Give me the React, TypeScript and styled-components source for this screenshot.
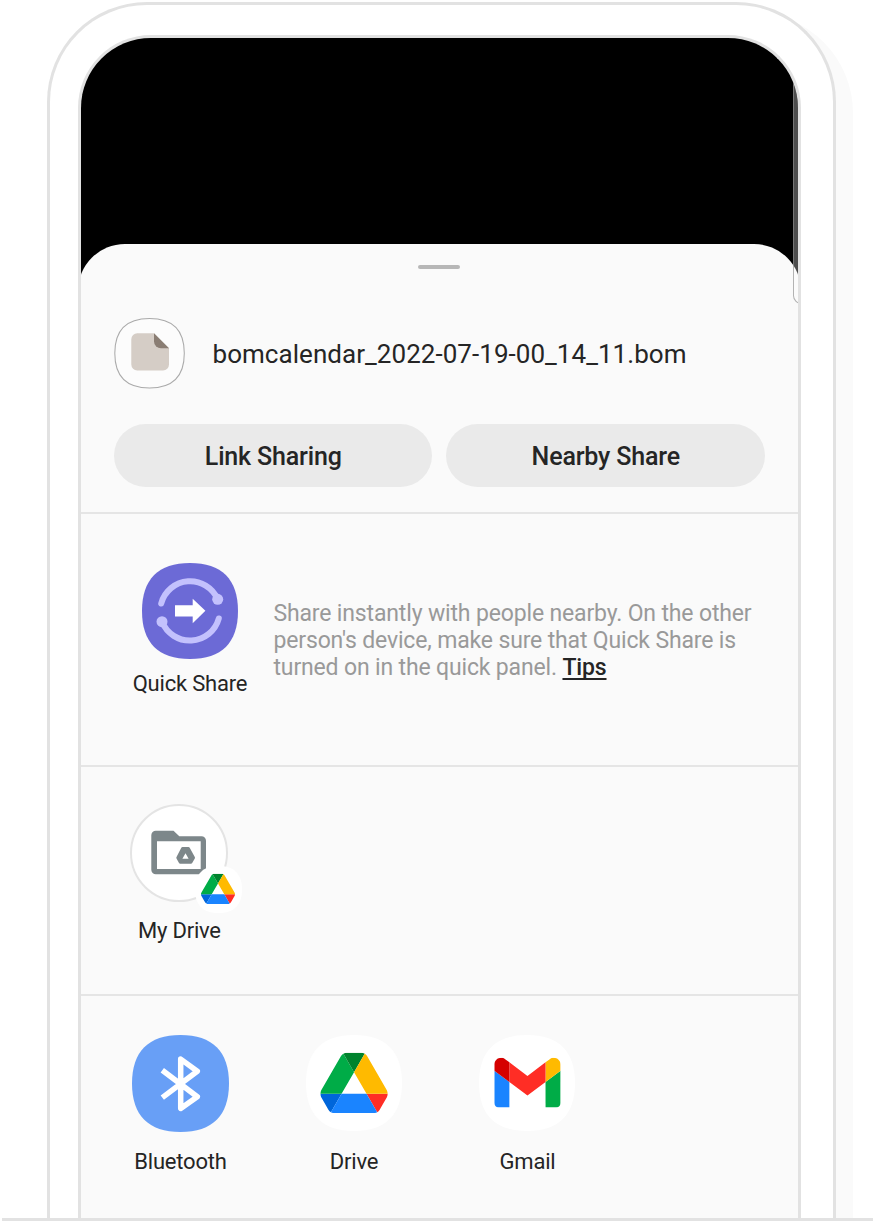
import React from 'react';
import styled, { createGlobalStyle } from 'styled-components';

const GlobalStyle = createGlobalStyle`
  *, *::before, *::after { box-sizing: border-box; }
  body { margin: 0; background: #fff; font-family: Roboto, "Liberation Sans", sans-serif; }
`;

const Page = styled.main`
  width: 886px;
  height: 1221px;
  overflow: hidden;
  display: flex;
  flex-direction: column;
  padding-top: 1.5px;
`;

const PhoneFrame = styled.div`
  flex: 1;
  min-height: 0;
  width: 789px;
  margin-left: 46.7px;
  padding: 30px 28.3px 0;
  border: 3px solid #e2e2e2;
  border-bottom: 0;
  border-radius: 100px 100px 0 0;
  background: #fff;
  box-shadow: 17px 11px 0 #fafafa;
`;

const GroundLine = styled.div`
  flex: none;
  position: relative;
  width: 871.5px;
  height: 3px;
  margin-left: 1.5px;
  background: #e2e2e2;
`;

const Screen = styled.div`
  position: relative;
  width: 723px;
  height: 100%;
  padding-top: 206px;
  overflow: hidden;
  border: 3px solid #e2e2e2;
  border-bottom: 0;
  border-radius: 73px 73px 0 0;
  background: #000;
`;

const EdgePanel = styled.div`
  position: absolute;
  top: 20px;
  right: -12px;
  width: 17px;
  height: 246px;
  border: 1.5px solid rgba(140, 140, 140, 0.65);
  border-radius: 9px;
  background: rgba(255, 255, 255, 0.3);
`;

const Sheet = styled.section`
  height: 980px;
  margin: 0 -3px;
  padding: 0 3px;
  border-radius: 47px 47px 0 0;
  background: #fafafa;
`;

const Handle = styled.div`
  width: 42px;
  height: 3.5px;
  margin-left: 304px;
  border-radius: 2px;
  background: #b7b7b7;
`;

const Section = styled.div<{ $height: number; $top: number; $left: number; $line?: boolean }>`
  height: ${(p) => p.$height}px;
  padding: ${(p) => p.$top}px 0 0 ${(p) => p.$left}px;
  border-top: ${(p) => (p.$line ? '2px solid #e5e5e5' : '0')};
`;

const FileRow = styled.div`
  display: flex;
  align-items: center;
  gap: 27.5px;
  height: 70px;
  margin-top: 49.5px;
`;

const FileName = styled.div`
  padding-top: 2px;
  font-size: 26px;
  line-height: 32px;
  letter-spacing: 0.045px;
  color: #252525;
  white-space: nowrap;
`;

const Actions = styled.div`
  display: flex;
  gap: 14px;
  margin-top: 35.5px;
`;

const ActionButton = styled.button`
  width: 318.5px;
  height: 63.5px;
  padding: 3px 0 0;
  border: 0;
  border-radius: 32px;
  background: #eaeaea;
  font: 500 25px/30px Roboto, "Liberation Sans", sans-serif;
  letter-spacing: -0.17px;
  color: #252525;
`;

const QuickRow = styled.div`
  display: flex;
  gap: 23.5px;
`;

const AppItem = styled.div<{ $width: number; $gap: number }>`
  flex: none;
  display: flex;
  flex-direction: column;
  align-items: center;
  gap: ${(p) => p.$gap}px;
  width: ${(p) => p.$width}px;
`;

const Label = styled.span`
  font-size: 22px;
  line-height: 26px;
  letter-spacing: -0.2px;
  color: #252525;
  white-space: nowrap;
`;

const Description = styled.p`
  width: 500px;
  margin: 37px 0 0;
  font-size: 23px;
  line-height: 27px;
  letter-spacing: -0.155px;
  color: #999;
  white-space: nowrap;
`;

const Tips = styled.a`
  font-weight: 500;
  color: #252525;
  text-decoration: underline;
  text-decoration-thickness: 1.5px;
  text-underline-offset: 3px;
  text-decoration-skip-ink: none;
`;

const Avatar = styled.div`
  position: relative;
  width: 98px;
  height: 98px;
  border: 2px solid #e4e4e4;
  border-radius: 50%;
  background: #fff;
`;

const FolderIcon = styled.svg`
  display: block;
  margin: -2px;
`;

const AvatarBadge = styled.div`
  position: absolute;
  left: 62.5px;
  top: 60px;
  width: 47px;
  height: 47px;
`;

const AppGrid = styled.div`
  display: flex;
  gap: 53.5px;
`;

const Icon = styled.svg`
  display: block;
  flex: none;
  overflow: visible;
`;

const SQUIRCLE = 'M50 0C83 0 100 17 100 50S83 100 50 100S0 83 0 50S17 0 50 0Z';

function DriveLogo({ x, y, width }: { x: number; y: number; width: number }) {
  return (
    <svg x={x} y={y} width={width} height={(width * 78) / 87.3} viewBox="0 0 87.3 78">
      <path fill="#0066da" d="m6.6 66.85 3.85 6.65c.8 1.4 1.95 2.5 3.3 3.3l13.75-23.8h-27.5c0 1.55.4 3.1 1.2 4.5z" />
      <path fill="#00ac47" d="m43.65 25-13.75-23.8c-1.35.8-2.5 1.9-3.3 3.3l-25.4 44a9.06 9.06 0 0 0-1.2 4.5h27.5z" />
      <path fill="#ff2d25" d="m73.55 76.8c1.35-.8 2.5-1.9 3.3-3.3l1.6-2.75 7.65-13.25c.8-1.4 1.2-2.95 1.2-4.5h-27.5z" />
      <path fill="#00832d" d="m43.65 25 13.75-23.8c-1.35-.8-2.9-1.2-4.5-1.2h-18.5c-1.6 0-3.15.45-4.5 1.2z" />
      <path fill="#1a84ff" d="m59.8 53h-32.3l-13.75 23.8c1.35.8 2.9 1.2 4.5 1.2h50.8c1.6 0 3.15-.45 4.5-1.2z" />
      <path fill="#ffba00" d="m73.4 26.5-12.7-22c-.8-1.4-1.95-2.5-3.3-3.3l-13.75 23.8 16.15 28h27.45c0-1.55-.4-3.1-1.2-4.5z" />
    </svg>
  );
}

function Squircle({ size, fill }: { size: number; fill: string }) {
  return <path d={SQUIRCLE} fill={fill} transform={`scale(${size / 100})`} />;
}

function FileIcon() {
  return (
    <Icon width="71" height="70" viewBox="0 0 71 70">
      <path d={SQUIRCLE} transform="translate(.8 .5) scale(.695)" fill="#fcfcfc" stroke="#aaa" strokeWidth="1.5" />
      <path d="M23.300 15.300H40L55 30.300V46.500a6 6 0 0 1-6 6H23.300a6 6 0 0 1-6-6V21.300a6 6 0 0 1 6-6Z" fill="#d5cdc6" />
      <path d="M40 15.300L55 30.300H47a7 7 0 0 1-7-7Z" fill="#8a7d73" />
    </Icon>
  );
}

function QuickShareIcon() {
  return (
    <Icon width="96" height="96" viewBox="0 0 96 96">
      <Squircle size={96} fill="#6c6ad6" />
      <g fill="none" stroke="#c3c1fd" strokeWidth="6" strokeLinecap="round">
        <path d="M19.200 40.500A30 30 0 0 1 75.700 36.300" />
        <path d="M76.800 55.500A30 30 0 0 1 20 58.700" />
      </g>
      <circle cx="75.700" cy="36.300" r="5.500" fill="#c3c1fd" />
      <circle cx="20" cy="58.700" r="5.500" fill="#c3c1fd" />
      <path d="M33 42.300H50.700V35.700L63.400 47.800L50.700 60.300V53.500H33Z" fill="#fff" />
    </Icon>
  );
}

function BluetoothIcon() {
  return (
    <Icon width="97" height="97" viewBox="0 0 97 97">
      <Squircle size={97} fill="#689ff6" />
      <path
        d="M30.300 35.300L65.300 61.800L48.700 73.400V24.100L65.300 36.300L30.300 62.600"
        fill="none"
        stroke="#fff"
        strokeWidth="5.500"
        strokeLinejoin="round"
      />
    </Icon>
  );
}

function DriveIcon() {
  return (
    <Icon width="96" height="96" viewBox="0 0 96 96">
      <Squircle size={96} fill="#fff" />
      <DriveLogo x={14.3} y={17.8} width={67.5} />
    </Icon>
  );
}

function GmailIcon() {
  return (
    <Icon width="96" height="96" viewBox="0 0 96 96">
      <Squircle size={96} fill="#fff" />
      <svg x="15.300" y="22.800" width="66.300" height="49.800" viewBox="52 42 88 66">
        <path fill="#1a84ff" d="M58 108h14V74L52 59v43c0 3.320 2.690 6 6 6" />
        <path fill="#00ac47" d="M120 108h14c3.320 0 6-2.690 6-6V59l-20 15" />
        <path fill="#ffba00" d="M120 48v26l20-15v-8c0-7.420-8.470-11.650-14.400-7.200" />
        <path fill="#ff2d25" d="M72 74V48l24 18 24-18v26L96 92" />
        <path fill="#d50000" d="M52 51v8l20 15V48l-5.600-4.200c-5.940-4.450-14.400-.22-14.400 7.200" />
      </svg>
    </Icon>
  );
}

function MyDriveIcon() {
  return (
    <Avatar>
      <FolderIcon width="98" height="98" viewBox="0 0 98 98">
        <g fill="#7d878a" fillRule="evenodd">
          <path d="M25.800 26.700H43.500L49.300 32.300H71.500a4.500 4.500 0 0 1 4.500 4.500V65.800a4.500 4.500 0 0 1-4.500 4.500H25.800a4.500 4.500 0 0 1-4.500-4.500V31.200a4.500 4.500 0 0 1 4.500-4.500ZM27 37.300V65H70.700V37.300Z" />
          <path d="M52.500 43H58.500a1.500 1.500 0 0 1 1.200.7L64.800 53a1.500 1.500 0 0 1 0 1.500L62.200 59a1.500 1.500 0 0 1-1.200.7H50.200A1.500 1.500 0 0 1 49 59L46.500 54.500a1.500 1.500 0 0 1 0-1.500L51.300 43.700A1.500 1.500 0 0 1 52.500 43ZM55.500 49.300L52.400 54.700H58.600Z" />
        </g>
      </FolderIcon>
      <AvatarBadge>
        <Icon width="47" height="47" viewBox="0 0 47 47">
          <Squircle size={47} fill="#fff" />
          <DriveLogo x={6} y={7.7} width={34} />
        </Icon>
      </AvatarBadge>
    </Avatar>
  );
}

export default function App() {
  return (
    <>
      <GlobalStyle />
      <Page>
        <PhoneFrame>
          <Screen>
            <Sheet>
              <Section $height={268.8} $top={21.5} $left={33}>
                <Handle />
                <FileRow>
                  <FileIcon />
                  <FileName>bomcalendar_2022-07-19-00_14_11.bom</FileName>
                </FileRow>
                <Actions>
                  <ActionButton>Link Sharing</ActionButton>
                  <ActionButton>Nearby Share</ActionButton>
                </Actions>
              </Section>
              <Section $line $height={252.8} $top={49} $left={49}>
                <QuickRow>
                  <AppItem $width={120} $gap={11.5}>
                    <QuickShareIcon />
                    <Label>Quick Share</Label>
                  </AppItem>
                  <Description>
                    Share instantly with people nearby. On the other
                    <br />
                    person's device, make sure that Quick Share is
                    <br />
                    turned on in the quick panel. <Tips>Tips</Tips>
                  </Description>
                </QuickRow>
              </Section>
              <Section $line $height={229.3} $top={36.7} $left={38.4}>
                <AppItem $width={120} $gap={16}>
                  <MyDriveIcon />
                  <Label>My Drive</Label>
                </AppItem>
              </Section>
              <Section $line $height={229} $top={38.5} $left={39.5}>
                <AppGrid>
                  <AppItem $width={120} $gap={17.5}>
                    <BluetoothIcon />
                    <Label>Bluetooth</Label>
                  </AppItem>
                  <AppItem $width={120} $gap={18.5}>
                    <DriveIcon />
                    <Label>Drive</Label>
                  </AppItem>
                  <AppItem $width={120} $gap={18.5}>
                    <GmailIcon />
                    <Label>Gmail</Label>
                  </AppItem>
                </AppGrid>
              </Section>
            </Sheet>
            <EdgePanel />
          </Screen>
        </PhoneFrame>
        <GroundLine />
      </Page>
    </>
  );
}
